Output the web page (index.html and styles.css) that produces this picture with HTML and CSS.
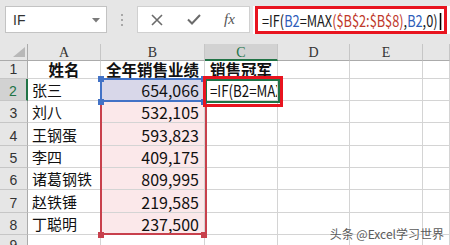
FILE: index.html
```html
<!DOCTYPE html>
<html lang="zh">
<head>
<meta charset="utf-8">
<link rel="stylesheet" href="styles.css">
</head>
<body>
<div class="app">
  <div class="fbar">
    <div class="namebox">
      <span class="nb-text">IF</span>
      <svg class="nb-arrow" width="8" height="5" viewBox="0 0 8 5"><polygon points="0,0 8,0 4,4.5" fill="#7a7a7a"/></svg>
    </div>
    <div class="grip"><i></i><i></i><i></i></div>
    <div class="btns">
      <svg class="ico" width="12" height="12" viewBox="0 0 12 12"><path d="M1 1 L11 11 M11 1 L1 11" stroke="#6b6b6b" stroke-width="1.6" fill="none"/></svg>
      <svg class="ico" width="14" height="11" viewBox="0 0 14 11"><path d="M1 5.5 L5 9.5 L13 1" stroke="#6b6b6b" stroke-width="2" fill="none"/></svg>
      <span class="fx">fx</span>
    </div>
    <div class="formula">
      <div class="annot">
        <span class="ftext narrow">=IF(<span class="rb">B2</span>=MAX<span class="rr">(</span><span class="rr">$B$2:$B$8</span><span class="rr">)</span>,<span class="rb">B2</span>,0)<span class="caret"></span></span>
      </div>
    </div>
  </div>

  <div class="sheet">
    <div class="corner"><svg width="12" height="10" viewBox="0 0 12 10"><polygon points="12,0 12,10 0,10" fill="#b8b8b8"/></svg></div>
    <div class="ch">A</div>
    <div class="ch">B</div>
    <div class="ch sel">C</div>
    <div class="ch">D</div>
    <div class="ch">E</div>
    <div class="ch last"></div>

    <div class="rh">1</div>
    <div class="c r1 ctr b">姓名</div>
    <div class="c r1 ctr b">全年销售业绩</div>
    <div class="c r1 ctr b">销售冠军</div>
    <div class="c r1"></div><div class="c r1"></div><div class="c r1"></div>

    <div class="rh sel">2</div>
    <div class="c">张三</div>
    <div class="c num fb">654,066</div>
    <div class="c edit"><span class="narrow ed">=IF(B2=MAX($B$2:$B$8),B2,0)</span></div>
    <div class="c"></div><div class="c"></div><div class="c"></div>

    <div class="rh">3</div>
    <div class="c">刘八</div>
    <div class="c num fr">532,105</div>
    <div class="c"></div><div class="c"></div><div class="c"></div><div class="c"></div>

    <div class="rh">4</div>
    <div class="c">王钢蛋</div>
    <div class="c num fr">593,823</div>
    <div class="c"></div><div class="c"></div><div class="c"></div><div class="c"></div>

    <div class="rh">5</div>
    <div class="c">李四</div>
    <div class="c num fr">409,175</div>
    <div class="c"></div><div class="c"></div><div class="c"></div><div class="c"></div>

    <div class="rh">6</div>
    <div class="c">诸葛钢铁</div>
    <div class="c num fr">809,995</div>
    <div class="c"></div><div class="c"></div><div class="c"></div><div class="c"></div>

    <div class="rh">7</div>
    <div class="c">赵铁锤</div>
    <div class="c num fr">219,585</div>
    <div class="c"></div><div class="c"></div><div class="c"></div><div class="c"></div>

    <div class="rh">8</div>
    <div class="c">丁聪明</div>
    <div class="c num fr">237,500</div>
    <div class="c"></div><div class="c"></div><div class="c"></div><div class="c"></div>

    <div class="rh">9</div>
    <div class="c"></div><div class="c"></div><div class="c"></div><div class="c"></div><div class="c"></div><div class="c"></div>

    <div class="range-red"></div>
    <div class="range-blue"></div>
    <i class="h hb" style="left:98px;top:32px"></i>
    <i class="h hb" style="left:201px;top:32px"></i>
    <i class="h hb" style="left:98px;top:55px"></i>
    <i class="h hb" style="left:201px;top:55px"></i>
    <i class="h hr" style="left:98px;top:188px"></i>
    <i class="h hr" style="left:201px;top:188px"></i>
    <div class="active"></div>
    <div class="annot2"></div>
  </div>

  <div class="wm">头条 @Excel学习世界</div>
</div>
</body>
</html>
```

FILE: styles.css
```css
* { box-sizing: border-box; margin: 0; padding: 0; }
html, body { width: 450px; height: 245px; overflow: hidden; background: #fff; }
body { font-family: "Noto Sans CJK SC", "Liberation Sans", sans-serif; }

.app { position: relative; width: 450px; height: 245px; overflow: hidden; }

/* formula bar */
.fbar {
  height: 44px;
  background: #e6e6e6;
  display: flex;
  align-items: flex-start;
  padding-top: 6px;
  padding-left: 5px;
}
.namebox {
  flex: 0 0 102px; height: 27px;
  background: #fff;
  border: 1px solid #c3c3c3;
  display: flex; align-items: center; justify-content: space-between;
  padding: 0 6px 0 7px;
}
.nb-text { font-family: "Liberation Sans", sans-serif; font-size: 14px; color: #333; }
.nb-arrow { margin-top: 1px; }
.grip {
  flex: 0 0 30px; height: 27px;
  display: flex; flex-direction: column; align-items: center; justify-content: center; gap: 3px;
}
.grip i { display: block; width: 2px; height: 2px; background: #a8a8a8; }
.btns {
  flex: 0 0 113px; height: 27px;
  background: #fff;
  border: 1px solid #d0d0d0;
  display: flex; align-items: center;
  padding-left: 13px; gap: 24px;
}
.fx { font-family: "Liberation Serif", serif; font-style: italic; font-size: 15px; color: #555; margin-left: -1px; }
.formula {
  margin-left: 3px;
  flex: 1 1 auto; min-width: 0; height: 28px;
  background: #fff;
  padding: 0 3px 0 2px;
}
.annot {
  height: 28px;
  border: 3px solid #e8141f;
  display: flex; align-items: center;
  padding-left: 4px;
  white-space: nowrap; overflow: hidden;
}
.narrow { display: inline-block; transform: scaleX(0.797); transform-origin: left center; white-space: nowrap; }
.narrow.ed { transform: scaleX(0.83); }
.ftext { font-size: 16px; line-height: 20px; color: #1a1a1a; }
.rb { color: #2f5eb9; }
.rr { color: #c0392b; }
.caret { display: inline-block; width: 1.3px; height: 17px; background: #000; margin-left: 3px; vertical-align: -3px; }

/* sheet */
.sheet {
  position: relative;
  display: grid;
  grid-template-columns: 28px 73px 104px 73px 72px 73px 27px;
  grid-template-rows: 17px 18px 22px 22px 23px 22px 22px 23px 22px 20px;
}
.corner {
  background: #e6e6e6;
  border-right: 1px solid #ababab; border-bottom: 1px solid #ababab;
  display: flex; align-items: flex-end; justify-content: flex-end;
  padding: 0 2px 3px 0;
}
.ch {
  background: #e6e6e6;
  border-right: 1px solid #c6c6c6; border-bottom: 1px solid #ababab;
  font-family: "Liberation Serif", serif; font-size: 14px; line-height: 17px;
  color: #333; text-align: center;
}
.ch.sel { background: #d2d2d2; color: #217346; border-bottom: 2px solid #217346; }
.rh {
  background: #e6e6e6;
  border-right: 1px solid #ababab; border-bottom: 1px solid #c6c6c6;
  font-family: "Liberation Sans", sans-serif; font-size: 14px; line-height: 16px; color: #333;
  display: flex; align-items: flex-end; justify-content: center; padding-bottom: 1px;
}
.rh.sel { background: #d2d2d2; color: #217346; border-right: 2px solid #217346; }
.c {
  border-right: 1px solid #d4d4d4; border-bottom: 1px solid #d4d4d4;
  font-size: 15px; line-height: 18px; color: #111;
  display: flex; align-items: flex-end; padding: 0 4px 1px 4px;
  white-space: nowrap; overflow: hidden;
}
.c.r1 { line-height: 17px; padding-bottom: 0; font-size: 15.5px; }
.ctr { justify-content: center; }
.b { font-weight: bold; }
.num { justify-content: flex-end; padding-right: 5px; font-size: 16px; }
.fb { background: #d8d7e9; }
.fr { background: #fbe8ea; }
.edit { padding-left: 5px; color: #111; font-size: 16px; }

.range-red {
  position: absolute; left: 100px; top: 34px; width: 107px; height: 157px;
  border: 2px solid #c8404c;
}
.range-blue {
  position: absolute; left: 100px; top: 34px; width: 107px; height: 24px;
  border: 2px solid #4272c6;
}
.h { position: absolute; display: block; width: 6px; height: 6px; }
.hb { background: #4272c6; }
.hr { background: #c8404c; }
.active {
  position: absolute; left: 205px; top: 35px; width: 75px; height: 24px;
  border: 2px solid #217346;
}
.annot2 {
  position: absolute; left: 203px; top: 32px; width: 80px; height: 31px;
  border: 3px solid #e8141f;
}

.wm {
  position: absolute; right: 6px; bottom: 4px;
  font-size: 12px; line-height: 14px; color: #5a5a5a;
  text-shadow: 0 0 2px #fff, 0 0 1px #fff;
}
```
